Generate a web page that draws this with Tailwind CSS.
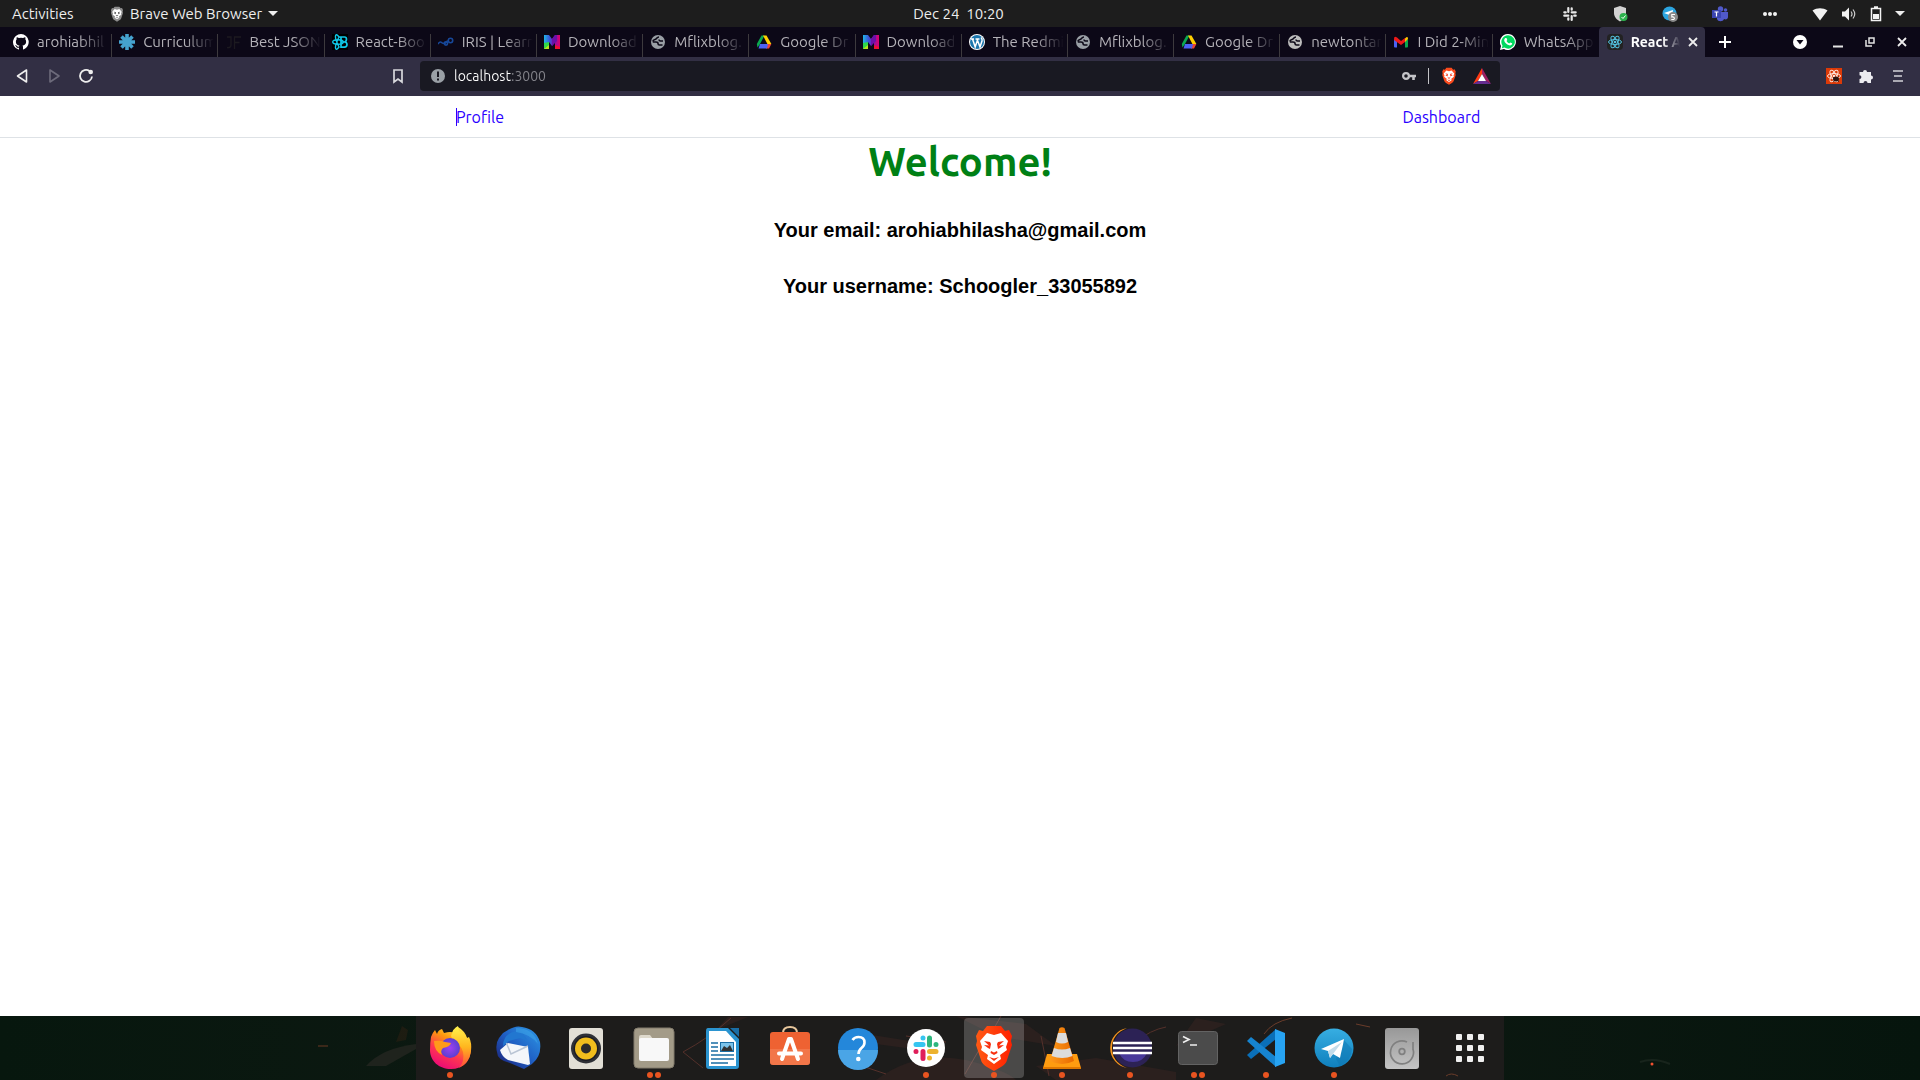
<!DOCTYPE html>
<html lang="en">
<head>
<meta charset="utf-8">
<meta name="viewport" content="width=device-width, initial-scale=1">
<title>React App</title>
<script src="https://cdn.jsdelivr.net/npm/@tailwindcss/browser@4"></script>
</head>
<body class="flex h-screen flex-col overflow-hidden bg-white font-['Ubuntu','Noto_Sans',sans-serif] text-[15px] leading-5">

<!-- Shared icons -->
<svg class="absolute size-0" aria-hidden="true">
  <defs>
    <linearGradient id="gM" x1="0" x2="1" y1="0" y2="0"><stop offset="0" stop-color="#1fb6e8"/><stop offset=".35" stop-color="#3a55d8"/><stop offset=".6" stop-color="#7a12b4"/><stop offset="1" stop-color="#e0006c"/></linearGradient>
    <linearGradient id="gFox" x1=".8" x2=".3" y1="0" y2="1"><stop offset="0" stop-color="#fff44f"/><stop offset=".35" stop-color="#ff980e"/><stop offset=".65" stop-color="#ff3750"/><stop offset="1" stop-color="#eb0878"/></linearGradient>
    <linearGradient id="gTail" x1="0" x2="0" y1="0" y2="1"><stop offset="0" stop-color="#fff44f"/><stop offset=".5" stop-color="#ffb61e"/><stop offset="1" stop-color="#ff4a3c"/></linearGradient>
    <radialGradient id="gGlobe"><stop offset="0" stop-color="#a040f0"/><stop offset="1" stop-color="#5a3fd0"/></radialGradient>
    <linearGradient id="gBird" x1="1" x2="0" y1="0" y2="1"><stop offset="0" stop-color="#2f9be8"/><stop offset=".5" stop-color="#1f5fc4"/><stop offset="1" stop-color="#1b1a70"/></linearGradient>
    <linearGradient id="gTg" x1="0" x2="0" y1="0" y2="1"><stop offset="0" stop-color="#37aee2"/><stop offset="1" stop-color="#0f7fbd"/></linearGradient>
    <linearGradient id="gLion" x1="0" x2="1" y1="0" y2="0"><stop offset="0" stop-color="#ff5a14"/><stop offset="1" stop-color="#ff2000"/></linearGradient>
    <linearGradient id="gCone" x1="0" x2="1" y1="0" y2="0"><stop offset="0" stop-color="#ff9a1a"/><stop offset="1" stop-color="#e86a00"/></linearGradient>
    <linearGradient id="gDisk" x1="0" x2="0" y1="0" y2="1"><stop offset="0" stop-color="#989898"/><stop offset="1" stop-color="#c4c4c4"/></linearGradient>
  </defs>
  <symbol id="i-m" viewBox="0 0 16 16"><path fill="url(#gM)" d="M0 1h5l3 4 3-4h5v14h-5V8l-3 4-3-4v7H0z"/><path fill="#2ed84a" d="M0 9l5-1v7H0z"/><path fill="#b6e61e" d="M0 15l5-4v4z"/><path fill="#f01030" d="M11 11l5 2v2h-5z"/><path fill="#6a10a8" d="M8 5l3-4h2v6l-5 5z"/></symbol>
  <symbol id="i-globe" viewBox="0 0 16 16"><circle cx="8" cy="8" r="7" fill="currentColor"/><path d="M9 3C6.500 3 7 5 5 5.500 3.500 6 3 6.500 2.800 7.500M2.800 8H6q2 0 2 1.500T9.500 11h3M13 7h-2.500Q9 7 9 5.500" fill="none" stroke="#0c0817" stroke-width="1.600"/></symbol>
  <symbol id="i-drive" viewBox="0 0 16 16"><path fill="#0aa84f" d="M5.500 1.500h3L4 10l-2.500 3.500L.8 10z"/><path fill="#ffcf00" d="M7 1.500h3.500l4.900 8.500h-4z"/><path fill="#ea4335" d="M11 10h4.400L13 14.500H10z"/><path fill="#4b62f4" d="M4 10h8l-1 4.500H2.500z"/><path fill="#0c0817" d="M7.800 5.800L10.200 10H5.400z"/></symbol>
  <symbol id="i-lion" viewBox="0 0 40 48"><path d="M13 2h14l4 5 4-1 3 6-1 5 1 4-5 15c-1 4-4 6-13 11C11 42 8 40 7 36L2 21l1-4-1-5 3-6 4 1z"/><path fill="var(--face,#fff)" d="M20 11l7-2 7 8-2 6 1 3-7 5 1 4-7 5-7-5 1-4-7-5 1-3-2-6 7-8z"/><path fill="var(--mark,#f83010)" d="M10 17l6 1 1 2-1 5-2-1-4-3 5 .5zM30 17l-6 1-1 2 1 5 2-1 4-3-5 .5zM17 27l3 1.500 3-1.500.5 2-3.500 2-3.500-2zM15 33l5 1.500 5-1.500-5 4z"/></symbol>
  <symbol id="i-atom" viewBox="0 0 16 16"><g fill="none" stroke="currentColor" stroke-width="1"><ellipse cx="8" cy="8" rx="6.500" ry="2.500"/><ellipse cx="8" cy="8" rx="6.500" ry="2.500" transform="rotate(60 8 8)"/><ellipse cx="8" cy="8" rx="6.500" ry="2.500" transform="rotate(120 8 8)"/></g><circle cx="8" cy="8" r="1.300" fill="currentColor"/></symbol>
</svg>

<!-- Desktop top bar -->
<header class="flex h-[27px] shrink-0 items-center bg-[#1d1d1d] text-[#eeeeee]">
  <div class="flex flex-1 items-center pl-3">
    <button class="w-[98px] text-left">Activities</button>
    <button class="flex items-center gap-1.5">
      <svg class="h-4 w-3.5 fill-[#8d8d8d] [--mark:#555]" viewBox="0 0 40 48"><use href="#i-lion"/></svg>
      <span>Brave Web Browser</span>
      <svg class="h-[5px] w-2.5" viewBox="0 0 10 5"><path fill="#eee" d="M0 0h10L5 5z"/></svg>
    </button>
  </div>
  <button class="whitespace-pre">Dec 24  10:20</button>
  <div class="flex flex-1 items-center justify-end pr-[15px]">
    <div class="flex items-center gap-[34px] pr-[34px]">
      <svg class="size-4" viewBox="0 0 16 16" fill="none" stroke="#e8e8e8" stroke-width="2.200" stroke-linecap="round"><path d="M6.300 2v4M2.300 6.300h1.500M9.700 10v4M12.200 9.700h1.500M9.700 6.300h4M9.700 2.300v1.400M2.300 9.700h4M6.300 12.300v1.400"/></svg>
      <svg class="size-4" viewBox="0 0 16 16"><path fill="#d2d2d2" d="M8 0l6 2v5c0 4-3 7-6 8.500C5 14 2 11 2 7V2z"/><circle cx="11.500" cy="11" r="4" fill="#2bb24c"/><path d="M9.500 11l1.500 1.500 2.500-3" fill="none" stroke="#fff"/></svg>
      <svg class="size-4" viewBox="0 0 16 16"><circle cx="7.500" cy="7.500" r="7" fill="#2ca5e0"/><path fill="#fff" d="M2 7l9-3-1 6z"/><circle cx="11" cy="11" r="5" fill="#8a8a8a"/><path d="M13 8.500H9.800V11c3-.6 3.500 2.500 1 2.500H9.300" fill="none" stroke="#fff" stroke-width="1.100"/></svg>
      <svg class="size-4" viewBox="0 0 16 16"><circle cx="8.500" cy="3" r="2.700" fill="#5059c9"/><circle cx="13.500" cy="4" r="1.800" fill="#5059c9"/><path fill="#5059c9" d="M5 6h11v5c0 2-2 3-4 2-1 3-6 3-7 0z"/><path fill="#3a44b0" d="M0 4h9v8H0z"/><path d="M2.500 6h4M4.500 6v4.500" stroke="#fff" stroke-width="1.200"/></svg>
      <svg class="size-4" viewBox="0 0 16 16" fill="#f2f2f2"><circle cx="3" cy="8" r="2"/><circle cx="8" cy="8" r="2"/><circle cx="13" cy="8" r="2"/></svg>
    </div>
    <button class="flex items-center gap-[13px]" aria-label="System menu">
      <svg class="size-4" viewBox="0 0 16 16"><path fill="#f2f2f2" d="M8 14.500L.5 4.500C5 1.500 11 1.500 15.500 4.500z"/></svg>
      <svg class="size-4" viewBox="0 0 16 16"><path fill="#f2f2f2" d="M1 5.500h3l4-4v13l-4-4H1z"/><path d="M10 5.500q2 2.500 0 5M12 3.500q3.500 4.500 0 9" fill="none" stroke="#ccc" stroke-width="1.200"/></svg>
      <svg class="h-4 w-3" viewBox="0 0 12 16"><path d="M1.500 2.500h9v12h-9zM4 1h4" fill="none" stroke="#f2f2f2" stroke-width="1.500"/><path fill="#f2f2f2" d="M3 8h6v5H3z"/></svg>
      <svg class="h-[5px] w-2.5" viewBox="0 0 10 5"><path fill="#eee" d="M0 0h10L5 5z"/></svg>
    </button>
  </div>
</header>

<!-- Browser tab strip -->
<div class="flex h-[30px] shrink-0 items-stretch bg-[#0c0817] pl-1.5">
  <div class="grid min-w-0 flex-1 grid-cols-16 text-[#b4b2b8]" role="tablist">
    <button role="tab" class="flex min-w-0 items-center gap-2 bg-linear-to-b from-transparent from-[7px] to-[#3d3a3e] to-[7px] bg-size-[1px_100%] bg-right bg-no-repeat pr-1 pl-[7px]">
      <svg class="size-4 shrink-0" viewBox="0 0 16 16"><path fill="#fff" d="M8 0a8 8 0 0 0-2.500 15.600c.4 0 .5-.2.500-.4v-1.500c-2.200.5-2.700-1-2.700-1-.4-.9-.9-1.200-.9-1.200-.7-.5.1-.5.1-.5.800.1 1.200.8 1.200.8.700 1.300 1.900.9 2.300.7.100-.5.300-.9.500-1.100-1.800-.2-3.600-.9-3.600-4 0-.8.300-1.500.8-2.100 0-.2-.4-1 .1-2.100 0 0 .7-.2 2.200.8a7.500 7.500 0 0 1 4 0c1.500-1 2.200-.8 2.200-.8.500 1.100.1 1.900.1 2.100.5.600.8 1.300.8 2.100 0 3.100-1.900 3.800-3.700 4 .3.300.6.800.6 1.500v2.200c0 .2.100.5.500.4A8 8 0 0 0 8 0"/></svg>
      <span class="min-w-0 flex-1 overflow-hidden text-left whitespace-nowrap [mask-image:linear-gradient(to_right,black_60%,transparent)]">arohiabhil</span>
    </button>
    <button role="tab" class="flex min-w-0 items-center gap-2 bg-linear-to-b from-transparent from-[7px] to-[#3d3a3e] to-[7px] bg-size-[1px_100%] bg-right bg-no-repeat pr-1 pl-[7px]">
      <svg class="size-4 shrink-0" viewBox="0 0 16 16"><path d="M8 0v16M0 8h16M2.500 2.500l11 11M13.500 2.500l-11 11" stroke="#45a3cf" stroke-width="3.600"/></svg>
      <span class="min-w-0 flex-1 overflow-hidden text-left whitespace-nowrap [mask-image:linear-gradient(to_right,black_60%,transparent)]">Curriculum</span>
    </button>
    <button role="tab" class="flex min-w-0 items-center gap-2 bg-linear-to-b from-transparent from-[7px] to-[#3d3a3e] to-[7px] bg-size-[1px_100%] bg-right bg-no-repeat pr-1 pl-[7px]">
      <svg class="size-4 shrink-0" viewBox="0 0 16 16" fill="none" stroke="#1c1a20" stroke-width="1.300"><path d="M2 3h4v8q0 3-4 2.500M9.500 15V3H16M9.500 8.500h5"/></svg>
      <span class="min-w-0 flex-1 overflow-hidden text-left whitespace-nowrap [mask-image:linear-gradient(to_right,black_60%,transparent)]">Best JSON</span>
    </button>
    <button role="tab" class="flex min-w-0 items-center gap-2 bg-linear-to-b from-transparent from-[7px] to-[#3d3a3e] to-[7px] bg-size-[1px_100%] bg-right bg-no-repeat pr-1 pl-[7px]">
      <svg class="size-4 shrink-0 bg-black" viewBox="0 0 16 16" fill="none" stroke="#0fc8e8" stroke-width="1.400"><path d="M7 3h5.500q2 0 2 2.300T12.500 8q2.500 0 2.500 2.500t-2.500 2.700H9V3M9 8h4" stroke-width="1.700"/><ellipse cx="6" cy="8" rx="5.300" ry="2.200"/><path d="M7 3Q4-1 3.500 2T7 13q-3 4-3.500 1T7 3"/></svg>
      <span class="min-w-0 flex-1 overflow-hidden text-left whitespace-nowrap [mask-image:linear-gradient(to_right,black_60%,transparent)]">React-Boo</span>
    </button>
    <button role="tab" class="flex min-w-0 items-center gap-2 bg-linear-to-b from-transparent from-[7px] to-[#3d3a3e] to-[7px] bg-size-[1px_100%] bg-right bg-no-repeat pr-1 pl-[7px]">
      <svg class="size-4 shrink-0" viewBox="0 0 16 16" fill="none" stroke="#17489a" stroke-width="1.600"><path d="M0 10q2-3 3.500-1.500T7.500 9q1-2 2.500-2"/><circle cx="8" cy="9.500" r="1.600"/><circle cx="12.500" cy="6.500" r="2.200"/></svg>
      <span class="min-w-0 flex-1 overflow-hidden text-left whitespace-nowrap [mask-image:linear-gradient(to_right,black_60%,transparent)]">IRIS | Learn</span>
    </button>
    <button role="tab" class="flex min-w-0 items-center gap-2 bg-linear-to-b from-transparent from-[7px] to-[#3d3a3e] to-[7px] bg-size-[1px_100%] bg-right bg-no-repeat pr-1 pl-[7px]">
      <svg class="size-4 shrink-0"><use href="#i-m"/></svg>
      <span class="min-w-0 flex-1 overflow-hidden text-left whitespace-nowrap [mask-image:linear-gradient(to_right,black_60%,transparent)]">Download</span>
    </button>
    <button role="tab" class="flex min-w-0 items-center gap-2 bg-linear-to-b from-transparent from-[7px] to-[#3d3a3e] to-[7px] bg-size-[1px_100%] bg-right bg-no-repeat pr-1 pl-[7px]">
      <svg class="size-4 shrink-0 text-[#9aa0a6]"><use href="#i-globe"/></svg>
      <span class="min-w-0 flex-1 overflow-hidden text-left whitespace-nowrap [mask-image:linear-gradient(to_right,black_60%,transparent)]">Mflixblog.</span>
    </button>
    <button role="tab" class="flex min-w-0 items-center gap-2 bg-linear-to-b from-transparent from-[7px] to-[#3d3a3e] to-[7px] bg-size-[1px_100%] bg-right bg-no-repeat pr-1 pl-[7px]">
      <svg class="size-4 shrink-0"><use href="#i-drive"/></svg>
      <span class="min-w-0 flex-1 overflow-hidden text-left whitespace-nowrap [mask-image:linear-gradient(to_right,black_60%,transparent)]">Google Dr</span>
    </button>
    <button role="tab" class="flex min-w-0 items-center gap-2 bg-linear-to-b from-transparent from-[7px] to-[#3d3a3e] to-[7px] bg-size-[1px_100%] bg-right bg-no-repeat pr-1 pl-[7px]">
      <svg class="size-4 shrink-0"><use href="#i-m"/></svg>
      <span class="min-w-0 flex-1 overflow-hidden text-left whitespace-nowrap [mask-image:linear-gradient(to_right,black_60%,transparent)]">Download</span>
    </button>
    <button role="tab" class="flex min-w-0 items-center gap-2 bg-linear-to-b from-transparent from-[7px] to-[#3d3a3e] to-[7px] bg-size-[1px_100%] bg-right bg-no-repeat pr-1 pl-[7px]">
      <svg class="size-4 shrink-0" viewBox="0 0 16 16"><circle cx="8" cy="8" r="8" fill="#fff"/><circle cx="8" cy="8" r="7" fill="#1b76ad"/><path d="M2 5h3M3.500 5l2.700 8L8.500 6M6.500 5h4M8 5l3 8 2-6q.5-2-1-3.500" fill="none" stroke="#fff" stroke-width="1.500"/></svg>
      <span class="min-w-0 flex-1 overflow-hidden text-left whitespace-nowrap [mask-image:linear-gradient(to_right,black_60%,transparent)]">The Redmi</span>
    </button>
    <button role="tab" class="flex min-w-0 items-center gap-2 bg-linear-to-b from-transparent from-[7px] to-[#3d3a3e] to-[7px] bg-size-[1px_100%] bg-right bg-no-repeat pr-1 pl-[7px]">
      <svg class="size-4 shrink-0 text-[#9aa0a6]"><use href="#i-globe"/></svg>
      <span class="min-w-0 flex-1 overflow-hidden text-left whitespace-nowrap [mask-image:linear-gradient(to_right,black_60%,transparent)]">Mflixblog.</span>
    </button>
    <button role="tab" class="flex min-w-0 items-center gap-2 bg-linear-to-b from-transparent from-[7px] to-[#3d3a3e] to-[7px] bg-size-[1px_100%] bg-right bg-no-repeat pr-1 pl-[7px]">
      <svg class="size-4 shrink-0"><use href="#i-drive"/></svg>
      <span class="min-w-0 flex-1 overflow-hidden text-left whitespace-nowrap [mask-image:linear-gradient(to_right,black_60%,transparent)]">Google Dr</span>
    </button>
    <button role="tab" class="flex min-w-0 items-center gap-2 bg-linear-to-b from-transparent from-[7px] to-[#3d3a3e] to-[7px] bg-size-[1px_100%] bg-right bg-no-repeat pr-1 pl-[7px]">
      <svg class="size-4 shrink-0 text-[#bdbdbd]"><use href="#i-globe"/></svg>
      <span class="min-w-0 flex-1 overflow-hidden text-left whitespace-nowrap [mask-image:linear-gradient(to_right,black_60%,transparent)]">newtontar</span>
    </button>
    <button role="tab" class="flex min-w-0 items-center gap-2 bg-linear-to-b from-transparent from-[7px] to-[#3d3a3e] to-[7px] bg-size-[1px_100%] bg-right bg-no-repeat pr-1 pl-[7px]">
      <svg class="size-4 shrink-0" viewBox="0 0 16 16"><path fill="#4b62f4" d="M1 5l3 2v6.500H2q-1 0-1-1z"/><path fill="#0aa84f" d="M12 7l3-2v7.500q0 1-1 1h-2z"/><path fill="#ffc400" d="M12 4.500Q15 1.500 15 5l-3 3z"/><path fill="#f01818" d="M1 5q0-3.500 3-1.500l4 3.500 4-3v4l-4 3-7-5z"/></svg>
      <span class="min-w-0 flex-1 overflow-hidden text-left whitespace-nowrap [mask-image:linear-gradient(to_right,black_60%,transparent)]">I Did 2-Min</span>
    </button>
    <button role="tab" class="flex min-w-0 items-center gap-2 pr-1 pl-[7px]">
      <svg class="size-4 shrink-0" viewBox="0 0 16 16"><path fill="#fff" d="M8 0a8 8 0 1 1-4 15L0 16l1-4A8 8 0 0 1 8 0"/><path fill="#00d95f" d="M8 1.300a6.700 6.700 0 1 1-3.500 12.300l-2.700.7.700-2.600A6.700 6.700 0 0 1 8 1.300"/><path fill="#fff" d="M5.500 4l1 .1.800 1.900-.8 1q1 1.700 2.700 2.400l1-1 1.900.9v1q-1 1.500-2.900 1C6.500 10.500 4.500 8.500 4.200 6.500 4.200 5 5 4.200 5.500 4"/></svg>
      <span class="min-w-0 flex-1 overflow-hidden text-left whitespace-nowrap [mask-image:linear-gradient(to_right,black_60%,transparent)]">WhatsApp</span>
    </button>
    <div role="tab" aria-selected="true" class="flex min-w-0 items-center gap-2 rounded-t-sm bg-[#322f44] pr-[7px] pl-2 text-white">
      <svg class="size-4 shrink-0 rounded-sm bg-[#222] text-[#53c1de]"><use href="#i-atom"/></svg>
      <span class="min-w-0 flex-1 overflow-hidden text-sm font-bold whitespace-nowrap [mask-image:linear-gradient(to_right,black_65%,transparent)]">React A</span>
      <button aria-label="Close tab"><svg class="size-2.5" viewBox="0 0 10 10"><path d="M1 1l8 8M9 1L1 9" stroke="#eee" stroke-width="1.800"/></svg></button>
    </div>
  </div>
  <div class="flex w-[215px] shrink-0 items-center pr-3 pl-[14px]">
    <button aria-label="New tab"><svg class="size-3" viewBox="0 0 12 12"><path d="M6 0v12M0 6h12" stroke="#fff" stroke-width="2"/></svg></button>
    <div class="ml-auto flex items-center gap-[22px]">
      <button aria-label="Search tabs"><svg class="size-3.5" viewBox="0 0 14 14"><circle cx="7" cy="7" r="7" fill="#fff"/><path fill="#0c0817" d="M3.500 5h7L7 9.500z"/></svg></button>
      <button aria-label="Minimize"><svg class="ml-1 h-3 w-2.5" viewBox="0 0 10 12"><path d="M0 10.500h10" stroke="#e4e4e4" stroke-width="2"/></svg></button>
      <button aria-label="Restore"><svg class="size-2.5" viewBox="0 0 10 10" fill="none" stroke="#e4e4e4" stroke-width="1.500"><path d="M4 1h5v5H4zM1 3v6h6"/></svg></button>
      <button aria-label="Close"><svg class="mr-px size-2.5" viewBox="0 0 10 10"><path d="M1 1l8 8M9 1L1 9" stroke="#eee" stroke-width="1.800"/></svg></button>
    </div>
  </div>
</div>

<!-- Browser toolbar -->
<div class="flex h-[39px] shrink-0 items-center bg-[#322f44] pb-px">
  <div class="flex w-[420px] shrink-0 items-center pr-4 pl-[14px]">
    <button class="mr-4" aria-label="Back"><svg class="size-4" viewBox="0 0 16 16"><path d="M12.500 2v12L3.500 8z" fill="none" stroke="#eee" stroke-width="1.600" stroke-linejoin="round"/></svg></button>
    <button class="mr-4" aria-label="Forward"><svg class="size-4" viewBox="0 0 16 16"><path d="M4 2v12l9-6z" fill="none" stroke="#6d6b7b" stroke-width="1.600" stroke-linejoin="round"/></svg></button>
    <button aria-label="Reload"><svg class="size-4" viewBox="0 0 16 16"><path d="M11.500 3A6 6 0 1 0 14 8.500" fill="none" stroke="#eee" stroke-width="1.800"/><circle cx="12.700" cy="4" r="2.300" fill="#eee"/></svg></button>
    <button class="ml-auto" aria-label="Bookmark"><svg class="h-4 w-3" viewBox="0 0 12 16"><path d="M2 2h8v12l-4-3-4 3z" fill="none" stroke="#d8d8dc" stroke-width="1.700"/></svg></button>
  </div>
  <div class="flex h-[30px] min-w-0 flex-1 items-center rounded bg-[#191922] pr-[9px] pl-2.5">
    <svg class="size-4" viewBox="0 0 16 16"><circle cx="8" cy="8" r="7" fill="#9aa0a6"/><path d="M8 3.500V9M8 10.500v2" stroke="#191922" stroke-width="2"/></svg>
    <input type="text" aria-label="Address" value="localhost:3000" class="ml-2 min-w-0 flex-1 bg-linear-to-r from-white from-[58px] to-[#85858c] to-[58px] bg-clip-text text-sm text-transparent outline-none">
    <svg class="h-4 w-3.5" viewBox="0 0 14 16"><circle cx="4" cy="8" r="2.900" fill="none" stroke="#c4c4c8" stroke-width="2.200"/><path d="M7 8h7M11.500 8v4" stroke="#c4c4c8" stroke-width="2.600"/></svg>
    <span class="mx-3 h-4 w-px bg-[#c4c4c8]"></span>
    <button class="mr-4" aria-label="Brave Shields"><svg class="h-[18px] w-4 fill-[#fb4a1c]" viewBox="0 0 40 48"><use href="#i-lion"/></svg></button>
    <button aria-label="Rewards"><svg class="h-4 w-[18px]" viewBox="0 0 18 16"><path fill="#ff3a14" d="M9 0L0 16l5-3 4-7z"/><path fill="#9e1f63" d="M9 0l9 16-5-3-4-7z"/><path fill="#662d91" d="M0 16h18l-5-3H5z"/><path fill="#fff" d="M9 6l4 7H5z"/></svg></button>
  </div>
  <div class="flex w-[420px] shrink-0 items-center justify-end gap-4 pr-[14px]">
    <button aria-label="React extension"><svg class="size-4 bg-[#dc3a08] text-[#ffe4da]" viewBox="0 0 16 16"><use href="#i-atom"/><ellipse cx="10" cy="11" rx="3" ry="2.500" fill="#2a1410"/><path d="M7 9.500l6 4M7.500 13.500l5-5" stroke="#2a1410"/></svg></button>
    <button aria-label="Extensions"><svg class="size-4" viewBox="0 0 16 16"><path fill="#ececf0" d="M1.500 4H5a2 2 0 1 1 4 0h4v3.500a2 2 0 1 1 0 4V15H9.500a1.800 1.800 0 1 0-4 0h-4v-4a1.800 1.800 0 1 0 0-3.800z"/></svg></button>
    <button aria-label="Menu"><svg class="size-4" viewBox="0 0 16 16"><path d="M3 3h10M4 8h8M3 13h10" stroke="#d4d4d8" stroke-width="1.700"/></svg></button>
  </div>
</div>

<!-- Web page -->
<main class="min-h-0 flex-1 bg-white text-center">
  <nav class="flex h-[42px] items-center justify-between border-b border-[#dee2e6] pr-[22.9%] pl-[23.75%] text-base text-[#2a00ff]">
    <a href="#profile" class="relative"><span class="absolute inset-y-[3px] left-0 w-px bg-[#2a00ff]"></span>Profile</a>
    <a href="#dashboard">Dashboard</a>
  </nav>
  <h1 class="text-[40px] leading-12 font-bold text-[#008015]">Welcome!</h1>
  <div class="mt-8 flex flex-col gap-8 font-['Liberation_Sans',Arial,sans-serif] text-xl leading-6 font-bold text-black">
    <h2>Your email: arohiabhilasha@gmail.com</h2>
    <h2>Your username: Schoogler_33055892</h2>
  </div>
</main>

<!-- Dock over the wallpaper -->
<footer class="relative flex h-16 shrink-0 justify-center overflow-hidden bg-linear-to-r from-[#07170e] via-[#111a14] to-[#06150d]">
  <svg class="absolute inset-0 size-full" viewBox="0 0 1920 64" preserveAspectRatio="none" aria-hidden="true"><path fill="#1f231d" d="M366 50q16-18 50-22v5l-30 17z"/><path fill="#3a2414" opacity=".4" d="M396 26l6-16 6 4-2 10z"/><path d="M318 30h10" stroke="#6a3822"/><circle cx="1652" cy="48" r="1.500" fill="#f05030"/><path d="M1640 46q14-5 30 2" fill="none" stroke="#18241c" stroke-width="2"/></svg>
  <nav aria-label="Dock" class="relative flex items-center gap-2 bg-[#1d1c1b] px-1">
    <svg class="absolute inset-0 size-full" viewBox="0 0 1088 64" aria-hidden="true">
      <g fill="#3a2421" opacity=".5"><path d="M300 14l32-13h-20zM450 18l50 8-10 6-30-4zM460 64q40-30 90-20 40 10 50 20zM620 50l60-8 80 14v8H640zM540 0l40 20 60 10-30-22zM760 30l50-22-30-6z"/></g>
      <g fill="none" stroke="#54302a" stroke-width="1"><path d="M315 2q-22 20-48 34l20 16M585 0q-10 20-22 34l-14 24M625 20l8 40M720 26q14-12 30-15M446 50l24 8M490 20l40 6"/><path stroke="#6a3c2a" d="M876 2q-20 4-28 16M1030 60q5-4 12 0M940 8l14 3"/></g>
    </svg>

    <button aria-label="Firefox" class="relative flex size-[60px] items-center justify-center">
      <svg class="size-12" viewBox="0 0 48 48"><path fill="url(#gFox)" d="M5 13q2-5 4-7l2 4q1-4 5-5l2 4q7-2 10 0l4-6q7 4 9 11 3 1 4 11c0 12-8 20-20 20S4 37 4 26q0-7 1-13"/><path fill="url(#gTail)" d="M25 12q2-8 7-10l1 5q5 2 8 7l2-1q3 6 2 14-2 13-12 17 6-7 4-16-2-8-9-9"/><circle cx="24" cy="24" r="10" fill="url(#gGlobe)"/><path fill="#ff9a1a" d="M8 17q7-1 11 1l6 1q-1 4-8 5-3 3-1 7Q8 27 8 17"/></svg>
      <span class="absolute bottom-0 size-1.5 rounded-full bg-[#e95420]"></span>
    </button>
    <button aria-label="Thunderbird" class="relative flex size-[60px] items-center justify-center">
      <svg class="size-12" viewBox="0 0 48 48"><path fill="url(#gBird)" d="M14 6q8-5 14-3 14 2 18 15 2 14-8 22l-8 5-14-6Q3 36 3 28q-2-8 2-14l4-5z"/><path fill="#f4f6fa" d="M6 26l8-7 20 4 2 17-2 1-20-5q-6-3-8-10"/><path d="M12 18l5 12 17-8" fill="none" stroke="#b9c4d4" stroke-width="1.500"/><path fill="#2277d0" d="M9 22q0-12 13-15 8 0 11 10l-7-3-11 3z"/><path fill="#3fa9ea" opacity=".5" d="M22 4q18 0 22 16-8-10-22-12z"/></svg>
    </button>
    <button aria-label="Rhythmbox" class="relative flex size-[60px] items-center justify-center">
      <svg class="size-12" viewBox="0 0 48 48"><rect x="7" y="4" width="34" height="41" rx="3" fill="#e2dfd6"/><circle cx="24" cy="24.500" r="15" fill="#2e3036"/><circle cx="24" cy="24.500" r="12.500" fill="#1c1d24"/><circle cx="24" cy="24.500" r="11" fill="#f0bd1d"/><circle cx="24" cy="24.500" r="5" fill="#2b2b2b"/></svg>
    </button>
    <button aria-label="Files" class="relative flex size-[60px] items-center justify-center">
      <svg class="size-12" viewBox="0 0 48 48"><rect x="4" y="4" width="40" height="40" rx="4" fill="#a39b88" stroke="#827b6c"/><path fill="#ded9cc" d="M9 13q0-2 2-2h9l3 4v6H9z"/><rect x="9" y="14" width="30" height="23" rx="2" fill="#f8f8f8"/></svg>
      <span class="absolute bottom-0 flex gap-0.5"><i class="size-1.5 rounded-full bg-[#e95420]"></i><i class="size-1.5 rounded-full bg-[#e95420]"></i></span>
    </button>
    <button aria-label="LibreOffice Writer" class="relative flex size-[60px] items-center justify-center">
      <svg class="size-12" viewBox="0 0 48 48"><path fill="#2b94d0" d="M10 4h20l11 11v27q0 3-3 3H11q-3 0-3-3V7q0-3 2-3"/><path fill="#1a6da4" d="M32 4h9v9z"/><path fill="#fff" d="M11 7h17l10 11v24H11z"/><path d="M13 19h7M13 23h7M13 27h7M13 31h23M13 35h23M13 39h17" stroke="#1a6da4" stroke-width="1.600"/><rect x="22.500" y="18.500" width="13" height="9" fill="#7cc3ea" stroke="#1a6da4"/><path fill="#333" d="M23 27l3-5 3 2 3-3 3 6z"/></svg>
    </button>
    <button aria-label="Software" class="relative flex size-[60px] items-center justify-center">
      <svg class="size-12" viewBox="0 0 48 48"><path d="M17 9q0-6 7-6t7 6" fill="none" stroke="#e8c79c" stroke-width="2"/><rect x="4" y="8" width="40" height="33" rx="3" fill="#ee6232"/><path fill="#f58a60" opacity=".5" d="M4 25h40v13q0 3-3 3H7q-3 0-3-3z"/><path d="M16 35l7-20h2l7 20M13 29.500h22" fill="none" stroke="#fff" stroke-width="4" stroke-linejoin="round" stroke-linecap="round"/></svg>
    </button>
    <button aria-label="Help" class="relative flex size-[60px] items-center justify-center">
      <svg class="size-12" viewBox="0 0 48 48"><circle cx="24" cy="24" r="20" fill="#2487da"/><path fill="#4aa5e6" d="M4 26h40a20 20 0 0 1-40 0"/><path d="M18.500 16q2-3 6-3 6 0 6 5.500 0 3-3 5.500t-3 6" fill="none" stroke="#fff" stroke-width="2.600"/><circle cx="24.300" cy="35" r="2.300" fill="#fff"/></svg>
    </button>
    <button aria-label="Slack" class="relative flex size-[60px] items-center justify-center">
      <svg class="size-12" viewBox="0 0 48 48" fill="none" stroke-width="5" stroke-linecap="round"><circle cx="24" cy="24" r="19" fill="#fff"/><path stroke="#36c5f0" d="M21 14v0M14 20.500h7"/><path stroke="#2eb67d" d="M27.500 14v7M34 20.500v0"/><path stroke="#e01e5a" d="M14 27.500v0M21 27.500v7"/><path stroke="#ecb22e" d="M27.500 27.500H34M27.500 34v0"/></svg>
      <span class="absolute bottom-0 size-1.5 rounded-full bg-[#e95420]"></span>
    </button>
    <button aria-label="Brave" class="relative flex size-[60px] items-center justify-center rounded bg-white/20">
      <svg class="h-12 w-10" viewBox="0 0 40 48" fill="url(#gLion)"><use href="#i-lion"/></svg>
      <span class="absolute bottom-0 size-1.5 rounded-full bg-[#e95420]"></span>
    </button>
    <button aria-label="VLC" class="relative flex size-[60px] items-center justify-center">
      <svg class="size-12" viewBox="0 0 48 48"><path fill="#ff9c10" d="M9 30h30l4 14H5z"/><path fill="#e07800" d="M5 43h38v2H5z"/><path fill="url(#gCone)" d="M21.500 4q2.500-1.500 5 0L36 37q-12 6-24 0z"/><path fill="#dcdcdc" d="M20 9h8l2 9q-6 3-12 0zM16 24q8 3 16 0l2.500 8q-10 4-21 0z"/></svg>
      <span class="absolute bottom-0 size-1.5 rounded-full bg-[#e95420]"></span>
    </button>
    <button aria-label="Eclipse" class="relative flex size-[60px] items-center justify-center">
      <svg class="size-12" viewBox="0 0 48 48"><path fill="#f7941e" d="M21 4a20.300 20.300 0 0 0 0 40Q6 38 6 24T21 4"/><circle cx="26.500" cy="24" r="19.500" fill="#2c2255"/><path fill="#48389a" d="M13 29h28q-4 9-14 9t-14-9"/><path d="M7 19h39M7 24h39M7 29h39" stroke="#fff" stroke-width="2.300"/></svg>
      <span class="absolute bottom-0 size-1.5 rounded-full bg-[#e95420]"></span>
    </button>
    <button aria-label="Terminal" class="relative flex size-[60px] items-center justify-center">
      <svg class="size-12" viewBox="0 0 48 48"><rect x="4.500" y="7.500" width="39" height="33" rx="3" fill="#4b4b4b" stroke="#636363"/><path d="M9 12.500l6 3-6 3M16 21h7" fill="none" stroke="#eee" stroke-width="1.700"/></svg>
      <span class="absolute bottom-0 flex gap-0.5"><i class="size-1.5 rounded-full bg-[#e95420]"></i><i class="size-1.5 rounded-full bg-[#e95420]"></i></span>
    </button>
    <button aria-label="Visual Studio Code" class="relative flex size-[60px] items-center justify-center">
      <svg class="size-12" viewBox="0 0 48 48"><path fill="#0a6fb8" d="M5 31l4 4L34 15V5z"/><path fill="#1684d0" d="M5 17l4-4 25 20v10z"/><path fill="#27a3f2" d="M33 5l10 4v30l-10 4q0-2 0-4V9q0-2 0-4"/></svg>
      <span class="absolute bottom-0 size-1.5 rounded-full bg-[#e95420]"></span>
    </button>
    <button aria-label="Telegram" class="relative flex size-[60px] items-center justify-center">
      <svg class="size-12" viewBox="0 0 48 48"><circle cx="24" cy="24" r="19.500" fill="url(#gTg)"/><path fill="#0d76b2" opacity=".5" d="M33 15l9 10a19 19 0 0 1-12 17l-4-7z"/><path fill="#fff" d="M11 25l23-10c-1 7-3 13-4 19l-7-4-3 4-2-7z"/><path fill="#c3dcea" d="M18 27l14-9-9 12-3 4z"/></svg>
      <span class="absolute bottom-0 size-1.5 rounded-full bg-[#e95420]"></span>
    </button>
    <button aria-label="Disk" class="relative flex size-[60px] items-center justify-center">
      <svg class="size-12" viewBox="0 0 48 48"><rect x="7" y="4" width="34" height="41" rx="3" fill="url(#gDisk)"/><path d="M29 18a11.500 11.500 0 1 0 6 7M35 18v8" fill="none" stroke="#808080" stroke-width="1.700"/><circle cx="24" cy="27.500" r="2.800" fill="none" stroke="#808080" stroke-width="1.800"/></svg>
    </button>
    <button aria-label="Show applications" class="relative flex size-[60px] items-center justify-center">
      <svg class="size-12" viewBox="0 0 48 48" fill="#f0f0f0"><rect x="10" y="10" width="6" height="6" rx="1"/><rect x="21" y="10" width="6" height="6" rx="1"/><rect x="32" y="10" width="6" height="6" rx="1"/><rect x="10" y="21" width="6" height="6" rx="1"/><rect x="21" y="21" width="6" height="6" rx="1"/><rect x="32" y="21" width="6" height="6" rx="1"/><rect x="10" y="32" width="6" height="6" rx="1"/><rect x="21" y="32" width="6" height="6" rx="1"/><rect x="32" y="32" width="6" height="6" rx="1"/></svg>
    </button>
  </nav>
</footer>
</body>
</html>
